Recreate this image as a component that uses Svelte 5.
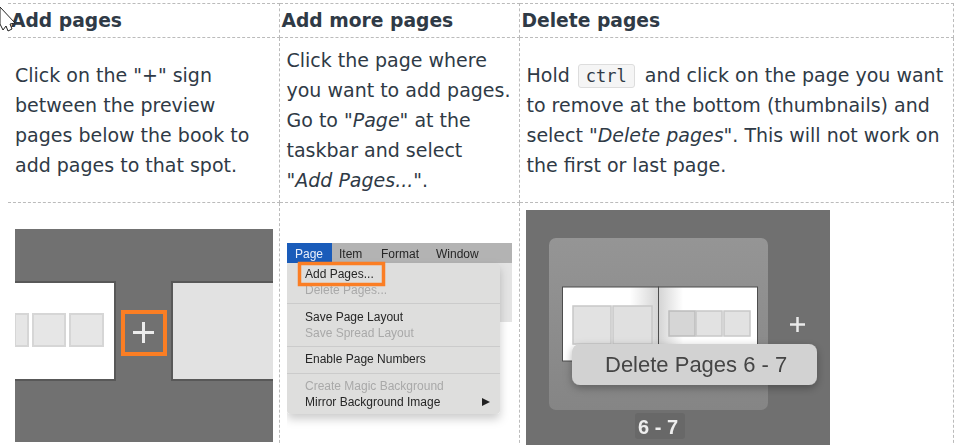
<script>
  const squares = [
    { x: 0, w: 13 },
    { x: 18, w: 32 },
    { x: 55, w: 33 }
  ];
</script>

<div class="page">
  <table>
    <colgroup>
      <col class="c1" />
      <col class="c2" />
      <col class="c3" />
    </colgroup>
    <thead>
      <tr>
        <th>Add pages</th>
        <th>Add more pages</th>
        <th>Delete pages</th>
      </tr>
    </thead>
    <tbody>
      <tr class="desc">
        <td class="t1">Click on the "+" sign between the preview pages below the book to add pages to that spot.</td>
        <td class="t2">Click the page where you want to add pages. Go to "<em>Page</em>" at the taskbar and select <span class="nb">"<em>Add Pages...</em>".</span></td>
        <td class="t3">Hold <code>ctrl</code> and click on the page you want to remove at the bottom (thumbnails) and select "<em>Delete pages</em>". This will not work on the first or last page.</td>
      </tr>
      <tr class="shots">
        <td class="s1">
          <svg width="258" height="213" viewBox="0 0 258 213">
            <defs>
              <filter id="b1"><feGaussianBlur stdDeviation="0.7" /></filter>
            </defs>
            <rect width="258" height="213" fill="#717171" />
            <rect x="-3" y="53" width="103" height="98" fill="#fff" stroke="#585858" stroke-width="2" />
            <g filter="url(#b1)">
              {#each squares as s}
                <rect x={s.x} y="85" width={s.w} height="32" fill="#e6e6e6" stroke="#d6d6d6" stroke-width="2" />
              {/each}
            </g>
            <rect x="157" y="53" width="110" height="98" fill="#e2e2e2" stroke="#585858" stroke-width="2" />
            <rect x="108" y="83" width="42" height="42" fill="none" stroke="#fb7e24" stroke-width="4" />
            <path d="M118 103.500H139M128.500 93V114" stroke="#ececec" stroke-width="3" filter="url(#b1)" />
          </svg>
        </td>
        <td class="s2">
          <svg width="225" height="190" viewBox="0 0 225 190">
            <defs>
              <filter id="sh" x="-10%" y="-10%" width="120%" height="125%"><feDropShadow dx="0" dy="5" stdDeviation="5" flood-color="#000" flood-opacity="0.2" /></filter>
              <filter id="soft"><feGaussianBlur stdDeviation="0.3" /></filter>
            </defs>
            <rect width="225" height="60" y="19" fill="#e4e4e4" />
            <rect x="0" y="0" width="225" height="20" fill="#b3b3b3" />
            <rect x="0" y="0" width="45" height="20" fill="#1a5cba" />
            <rect x="0" y="20" width="213" height="151" rx="4" fill="#dededd" filter="url(#sh)" />
            <g class="menu-text" filter="url(#soft)">
              <text x="8" y="15" class="blue">Page</text>
              <text x="52" y="15">Item</text>
              <text x="94" y="15">Format</text>
              <text x="149" y="15">Window</text>
              <text x="18" y="35">Add Pages...</text>
              <text x="18" y="51" class="dim">Delete Pages...</text>
              <text x="18" y="78">Save Page Layout</text>
              <text x="18" y="94" class="dim">Save Spread Layout</text>
              <text x="18" y="120">Enable Page Numbers</text>
              <text x="18" y="147" class="dim">Create Magic Background</text>
              <text x="18" y="163">Mirror Background Image</text>
            </g>
            <path d="M195 155L203 159L195 163Z" fill="#222" />
            <path d="M0 60.500H213M0 103.500H213M0 130.500H213" stroke="#cbcbcb" stroke-width="1" />
            <rect x="12.500" y="20.500" width="84" height="21" fill="none" stroke="#fb7e24" stroke-width="3.500" />
          </svg>
        </td>
        <td class="s3">
          <svg width="304" height="235" viewBox="0 0 304 235">
            <defs>
              <filter id="b3"><feGaussianBlur stdDeviation="0.6" /></filter>
              <filter id="soft3"><feGaussianBlur stdDeviation="0.4" /></filter>
              <filter id="sh3" x="-10%" y="-20%" width="120%" height="150%"><feDropShadow dx="0" dy="3" stdDeviation="4" flood-color="#000" flood-opacity="0.3" /></filter>
              <linearGradient id="panel" x1="0" x2="0" y1="0" y2="1">
                <stop offset="0" stop-color="#959595" />
                <stop offset="1" stop-color="#858585" />
              </linearGradient>
              <linearGradient id="lp" x1="0" x2="1" y1="0" y2="0">
                <stop offset="0.7" stop-color="#fff" />
                <stop offset="1" stop-color="#d4d4d4" />
              </linearGradient>
              <linearGradient id="rp" x1="0" x2="1" y1="0" y2="0">
                <stop offset="0" stop-color="#d4d4d4" />
                <stop offset="0.25" stop-color="#fff" />
              </linearGradient>
            </defs>
            <rect width="304" height="235" fill="#707070" />
            <rect x="23" y="28" width="219" height="172" rx="7" fill="url(#panel)" filter="url(#b3)" />
            <g filter="url(#b3)">
              <rect x="36.500" y="77" width="96" height="74" fill="url(#lp)" stroke="#4d4d4d" stroke-width="1" />
              <rect x="132.500" y="77" width="99" height="74" fill="url(#rp)" stroke="#4d4d4d" stroke-width="1" />
              <rect x="47" y="96" width="38" height="38" fill="#e2e2e2" stroke="#c8c8c8" stroke-width="1.500" />
              <rect x="87" y="96" width="39" height="38" fill="#e0e0e0" stroke="#c8c8c8" stroke-width="1.500" />
              <rect x="143" y="101" width="26" height="25" fill="#d6d6d6" stroke="#bcbcbc" stroke-width="1.500" />
              <rect x="170" y="101" width="26" height="25" fill="#e2e2e2" stroke="#c8c8c8" stroke-width="1.500" />
              <rect x="198" y="101" width="26" height="25" fill="#e2e2e2" stroke="#c8c8c8" stroke-width="1.500" />
              <path d="M264 114.500H279M271.500 107V122" stroke="#eaeaea" stroke-width="2.500" />
            </g>
            <rect x="46" y="134" width="245" height="41" rx="8" fill="#d2d2d2" filter="url(#sh3)" />
            <rect x="109" y="203" width="50" height="26" rx="3" fill="#686868" />
            <text x="79" y="161.500" class="del" filter="url(#soft3)">Delete Pages 6 - 7</text>
            <text x="112" y="224" class="num" filter="url(#soft3)">6 - 7</text>
          </svg>
        </td>
      </tr>
    </tbody>
  </table>
  <svg class="cursor" width="16" height="34" viewBox="0 0 16 34">
    <path d="M0 7L15 23L10 24L12 29L8 31L6 26L3 30L0 24Z" fill="#fff" stroke="#222" stroke-width="1" />
  </svg>
</div>

<style>
  :global(body) {
    margin: 0;
    background: #fff;
  }

  .page {
    position: relative;
    width: 956px;
    height: 445px;
    overflow: hidden;
    padding: 3px 0 0 8px;
    box-sizing: border-box;
    font-family: "DejaVu Sans", Verdana, sans-serif;
    color: #2f3a46;
  }

  table {
    width: 945px;
    table-layout: fixed;
    border-collapse: collapse;
    font-size: 19px;
    line-height: 30px;
  }

  .c1 { width: 271px; }
  .c2 { width: 240px; }
  .c3 { width: 434px; }

  th {
    height: 34px;
    padding: 0 0 0 2px;
    border: 1px dashed #bbb;
    text-align: left;
    font-size: 18.72px;
    font-weight: 700;
    box-sizing: border-box;
  }

  thead th:first-child {
    padding-left: 3px;
  }

  thead th:first-child,
  tbody td:first-child {
    border-left: none;
  }

  td {
    border: 1px dashed #bbb;
    padding: 0 7px;
    vertical-align: middle;
    box-sizing: border-box;
  }

  .desc td {
    height: 165px;
  }

  td.t1 {
    padding-right: 18px;
  }

  td.t3 {
    padding-right: 5px;
  }

  .nb {
    white-space: nowrap;
  }

  code {
    display: inline-block;
    font-family: "DejaVu Sans Mono", monospace;
    font-size: 17px;
    line-height: 22px;
    padding: 0 7px;
    margin: 0 4px 0 2px;
    background: #f5f5f5;
    border: 1px solid #ddd;
    border-radius: 3px;
  }

  .shots td {
    padding: 0;
    height: 250px;
    vertical-align: top;
    border-bottom: none;
  }

  .shots svg {
    display: block;
  }

  .s1 svg {
    margin: 26px 0 0 7px;
  }

  .s2 svg {
    margin: 40px 0 0 7px;
  }

  .s3 svg {
    margin: 7px 0 0 6px;
  }

  .menu-text text {
    font-family: "Liberation Sans", Arial, sans-serif;
    font-size: 12px;
    fill: #262626;
  }

  .menu-text text.blue {
    fill: #e8eefa;
  }

  .menu-text text.dim {
    fill: #a9a9a9;
  }

  .del {
    font-family: "Liberation Sans", Arial, sans-serif;
    font-size: 22px;
    fill: #444;
  }

  .num {
    font-family: "Liberation Sans", Arial, sans-serif;
    font-size: 20px;
    font-weight: 700;
    fill: #eee;
  }

  .cursor {
    position: absolute;
    left: 0;
    top: 0;
  }
</style>
